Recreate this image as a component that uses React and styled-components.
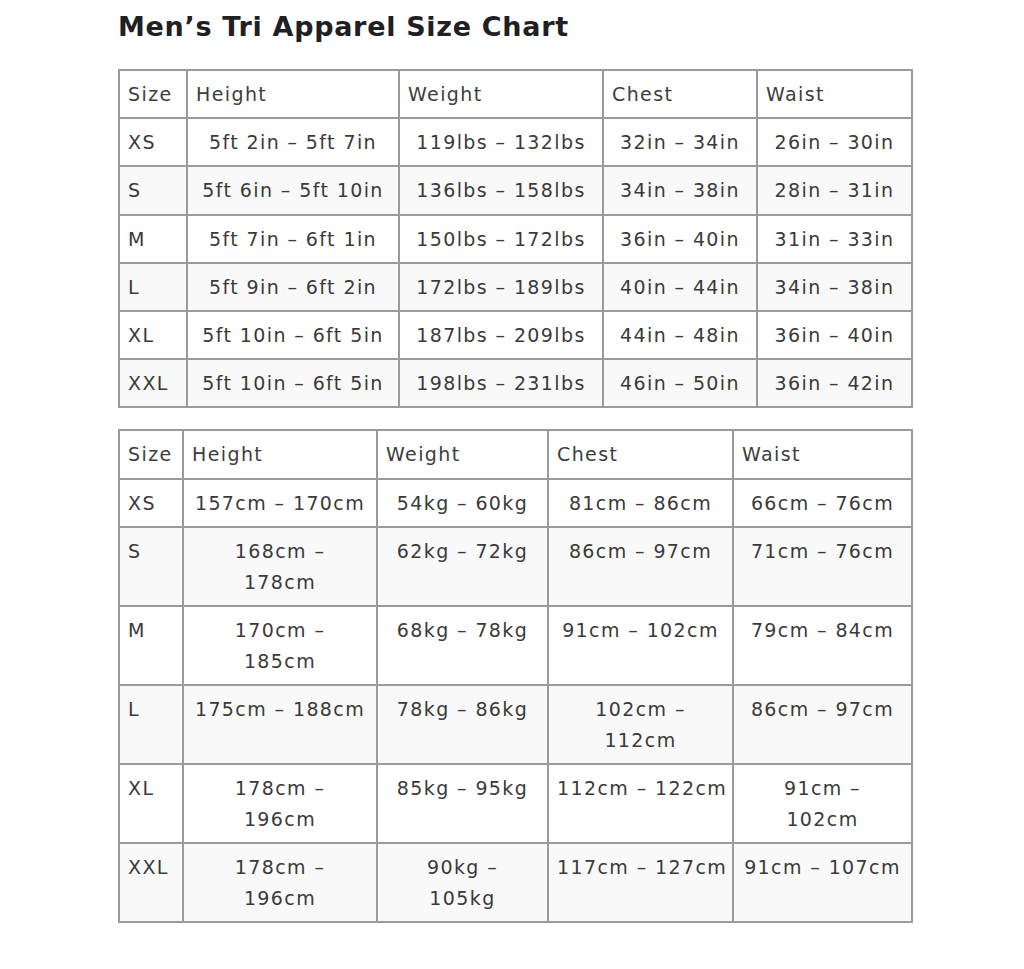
import styled, { createGlobalStyle } from "styled-components";

const GlobalStyle = createGlobalStyle`
  body {
    margin: 0;
    background: #ffffff;
    font-family: "DejaVu Sans", "Liberation Sans", sans-serif;
    color: #3a3a3a;
  }
`;

const imperial = {
  cols: [68, 212, 204, 154, 155],
  rows: [
    ["XS", "5ft 2in – 5ft 7in", "119lbs – 132lbs", "32in – 34in", "26in – 30in"],
    ["S", "5ft 6in – 5ft 10in", "136lbs – 158lbs", "34in – 38in", "28in – 31in"],
    ["M", "5ft 7in – 6ft 1in", "150lbs – 172lbs", "36in – 40in", "31in – 33in"],
    ["L", "5ft 9in – 6ft 2in", "172lbs – 189lbs", "40in – 44in", "34in – 38in"],
    ["XL", "5ft 10in – 6ft 5in", "187lbs – 209lbs", "44in – 48in", "36in – 40in"],
    ["XXL", "5ft 10in – 6ft 5in", "198lbs – 231lbs", "46in – 50in", "36in – 42in"],
  ],
};

// "|" marks where the original wraps onto a second line
const metric = {
  cols: [64, 194, 171, 185, 179],
  rows: [
    ["XS", "157cm – 170cm", "54kg – 60kg", "81cm – 86cm", "66cm – 76cm"],
    ["S", "168cm –|178cm", "62kg – 72kg", "86cm – 97cm", "71cm – 76cm"],
    ["M", "170cm –|185cm", "68kg – 78kg", "91cm – 102cm", "79cm – 84cm"],
    ["L", "175cm – 188cm", "78kg – 86kg", "102cm –|112cm", "86cm – 97cm"],
    ["XL", "178cm –|196cm", "85kg – 95kg", "112cm – 122cm", "91cm –|102cm"],
    ["XXL", "178cm –|196cm", "90kg –|105kg", "117cm – 127cm", "91cm – 107cm"],
  ],
};

const headers = ["Size", "Height", "Weight", "Chest", "Waist"];

function SizeTable({ data, lineHeight }) {
  return (
    <Table $lh={lineHeight}>
      <colgroup>
        {data.cols.map((w, i) => (
          <col key={i} style={{ width: w }} />
        ))}
      </colgroup>
      <thead>
        <tr>
          {headers.map(h => (
            <HeadCell key={h}>{h}</HeadCell>
          ))}
        </tr>
      </thead>
      <tbody>
        {data.rows.map((row, r) => (
          <Row key={row[0]} $shaded={r % 2 === 1}>
            {row.map((cell, c) => (
              <Cell key={c} $left={c === 0}>
                {cell.split("|").map((part, i) => (
                  <Line key={i}>{part}</Line>
                ))}
              </Cell>
            ))}
          </Row>
        ))}
      </tbody>
    </Table>
  );
}

export default function App() {
  return (
    <Page>
      <GlobalStyle />
      <Title>Men’s Tri Apparel Size Chart</Title>
      <SizeTable data={imperial} lineHeight={30.2} />
      <SizeTable data={metric} lineHeight={30.5} />
    </Page>
  );
}

const Page = styled.div`
  padding: 12px 0 40px 118px;
  width: 793px;
  display: flex;
  flex-direction: column;
  gap: 21px;
`;

const Title = styled.h1`
  margin: 0 0 6px;
  font-size: 27px;
  line-height: 30px;
  font-weight: 700;
  letter-spacing: 0.7px;
  color: #1f2024;
`;

const Table = styled.table`
  width: 793px;
  border-collapse: collapse;
  table-layout: fixed;
  font-size: 19px;
  letter-spacing: 1.4px;
  line-height: ${p => p.$lh}px;
`;

const HeadCell = styled.th`
  border: 2px solid #9b9b9d;
  padding: 8px 8px;
  font-weight: 400;
  text-align: left;
  color: #3d3d3d;
  background: #ffffff;
`;

const Row = styled.tr`
  background: ${p => (p.$shaded ? "#f9f9f9" : "#ffffff")};
`;

const Cell = styled.td`
  border: 2px solid #9b9b9d;
  padding: 8px 8px;
  vertical-align: top;
  text-align: ${p => (p.$left ? "left" : "center")};
  white-space: nowrap;
  overflow: hidden;
`;

const Line = styled.span`
  display: block;
`;
